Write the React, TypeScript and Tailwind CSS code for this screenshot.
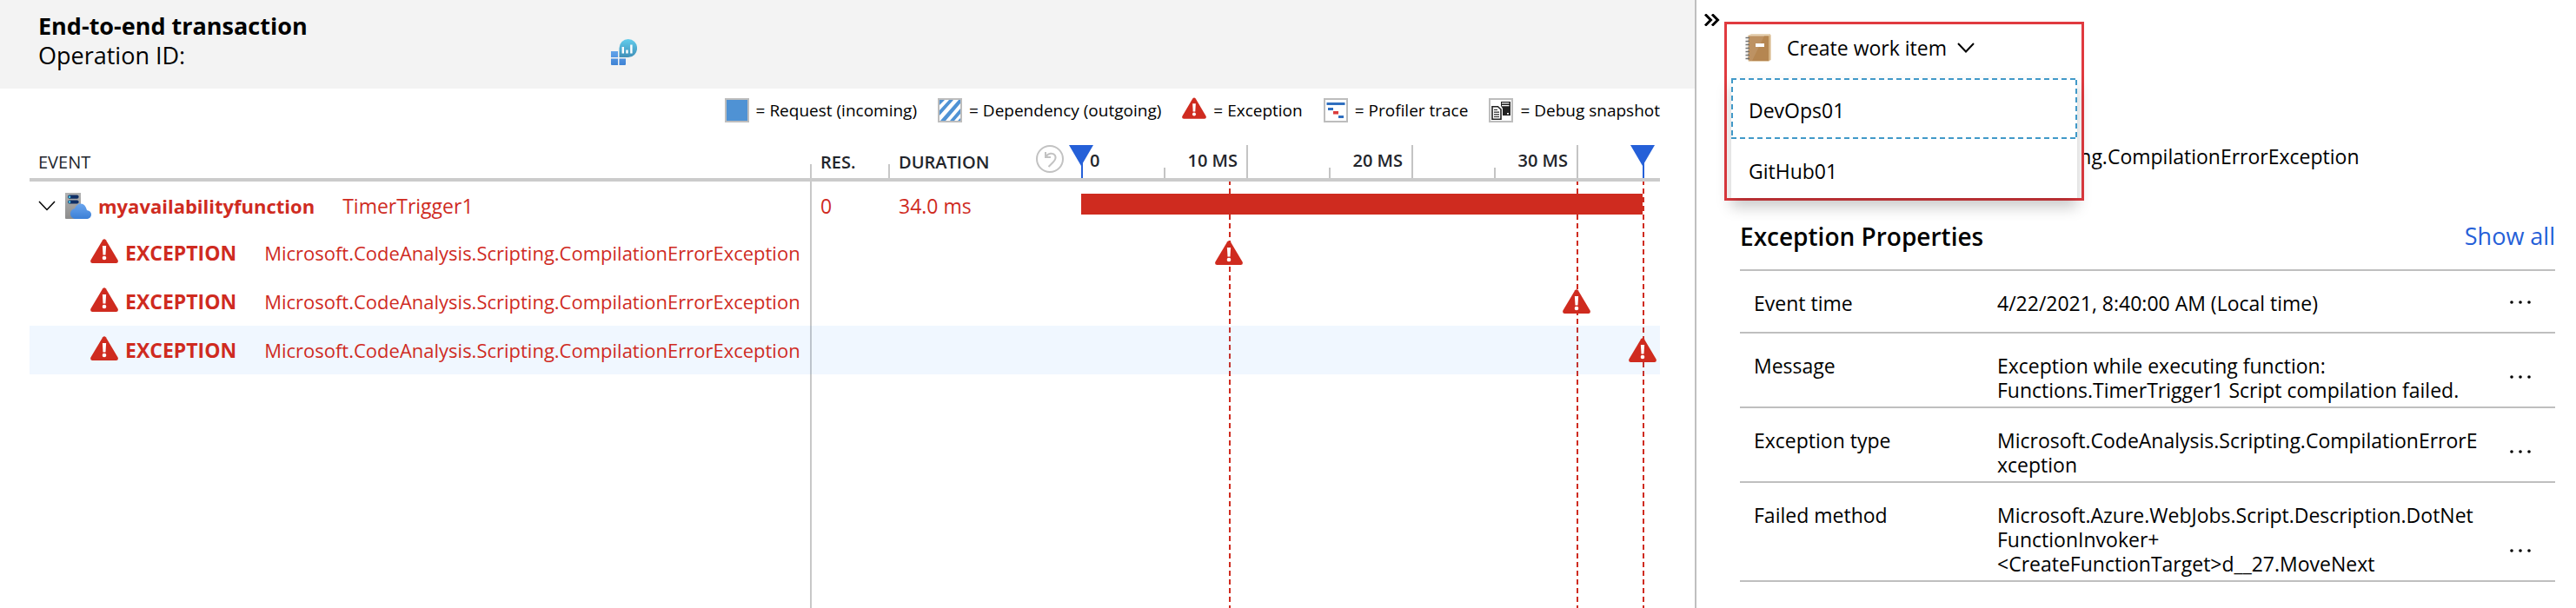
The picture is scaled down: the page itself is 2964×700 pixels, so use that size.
import type { ReactNode } from "react";

const RANGE_MS = 35.05;
const at = (ms: number) => ({ left: `${(ms / RANGE_MS) * 100}%` });

const COLUMNS = "grid grid-cols-[minmax(0,902fr)_86px_222px_minmax(0,666fr)]";

const exceptions = [
  { ms: 8.95, selected: false },
  { ms: 30, selected: false },
  { ms: 34, selected: true },
];

const properties = [
  { label: "Event time", value: "4/22/2021, 8:40:00 AM (Local time)" },
  {
    label: "Message",
    value: "Exception while executing function:\nFunctions.TimerTrigger1 Script compilation failed.",
  },
  {
    label: "Exception type",
    value: "Microsoft.CodeAnalysis.Scripting.CompilationErrorE\nxception",
  },
  {
    label: "Failed method",
    value:
      "Microsoft.Azure.WebJobs.Script.Description.DotNet\nFunctionInvoker+\n<CreateFunctionTarget>d__27.MoveNext",
  },
];

function ExceptionIcon({ className }: { className: string }) {
  return (
    <svg viewBox="0 0 32 28" className={className} aria-hidden="true">
      <path
        d="M14.2 1.2Q16-.9 17.8 1.2L31.6 24.6Q32.6 28 29.6 28H2.4Q-.6 28 .4 24.6Z"
        fill="#cf2b1f"
      />
      <path d="M13.9 8H18.1L17.5 18.6H14.5Z" fill="#fff" />
      <circle cx="16" cy="22" r="2.3" fill="#fff" />
    </svg>
  );
}

function InsightsIcon() {
  return (
    <svg viewBox="0 0 30 30" className="h-[30px] w-[30px]" aria-hidden="true">
      <defs>
        <linearGradient id="bubble" x1="0" y1="0" x2="0" y2="1">
          <stop offset="0" stopColor="#62cdec" />
          <stop offset="1" stopColor="#3f8fb8" />
        </linearGradient>
        <linearGradient id="tiles" x1="0" y1="0" x2="0" y2="1">
          <stop offset="0" stopColor="#62a3ea" />
          <stop offset="1" stopColor="#3f83d4" />
        </linearGradient>
      </defs>
      <path d="M0 14H8V21H0Z M0 22.5H8V30H1Q0 30 0 29Z M9.5 22.5H17V29Q17 30 16 30H9.5Z" fill="url(#tiles)" />
      <path d="M9.5 21V10.5A10.3 10.5 0 1 1 19.8 21Z" fill="url(#bubble)" />
      <path d="M12.6 9H15V16.5H12.6Z M17.3 12.5H19.7V16.5H17.3Z M22.2 6.5H24.6V16.5H22.2Z" fill="#fff" />
    </svg>
  );
}

function ServerIcon() {
  return (
    <svg viewBox="0 0 30 30" className="h-[30px] w-[30px] shrink-0" aria-hidden="true">
      <defs>
        <linearGradient id="drop" x1="0" y1="0" x2="0" y2="1">
          <stop offset="0" stopColor="#6aa5ee" />
          <stop offset="1" stopColor="#3b7fd6" />
        </linearGradient>
        <linearGradient id="case" x1="0" y1="0" x2="0" y2="1">
          <stop offset="0" stopColor="#b2b2b2" />
          <stop offset="1" stopColor="#8c8c8c" />
        </linearGradient>
      </defs>
      <path d="M0 0H18V30H1Q0 30 0 29Z" fill="url(#case)" />
      <rect x="3" y="2.6" width="12.6" height="4.2" rx="2" fill="#0f2f66" />
      <rect x="3" y="8.4" width="12.6" height="4.2" rx="2" fill="#0f2f66" />
      <circle cx="5" cy="4.7" r="1.3" fill="#50d0f0" />
      <circle cx="5" cy="10.5" r="1.3" fill="#50d0f0" />
      <path
        d="M18 12.5C21.5 12.5 24 15.5 25 20C28.5 20.5 30 22.5 30 25C30 28 27.5 30 24.500 30H12C8.500 30 6 27.500 6 24C6 21 8 18.500 11 18.200C12 15 14.500 12.500 18 12.500Z"
        fill="url(#drop)"
      />
    </svg>
  );
}

function NotebookIcon() {
  return (
    <svg viewBox="0 0 30 32" className="h-8 w-[30px]" aria-hidden="true">
      <path d="M3 2L7 0H29V30L27 32H4L3 30Z" fill="#e6d2b4" />
      <path d="M4 2.500H27V31H5L3 29Z" fill="#bd9263" />
      <path d="M22 2.500H27V31H8Z" fill="#b58651" />
      <path d="M27 2.500L29.500 1V30L27 31Z" fill="#d5b384" />
      <rect x="12" y="11" width="10" height="4" fill="#fff" />
      <path
        d="M.5 4.500H5M.5 8.500H5M.5 12.500H5M.5 16.500H5M.5 20.500H5M.5 24.500H5M.5 28.500H5"
        stroke="#6f6f6f"
        strokeWidth="1.600"
      />
      <path
        d="M.5 6H4M.5 10H4M.5 14H4M.5 18H4M.5 22H4M.5 26H4"
        stroke="#dedede"
        strokeWidth="1.200"
      />
    </svg>
  );
}

function Chevron({ className, strokeWidth }: { className: string; strokeWidth: number }) {
  return (
    <svg
      viewBox="0 0 20 12"
      className={className}
      fill="none"
      stroke="#000"
      strokeWidth={strokeWidth}
      aria-hidden="true"
    >
      <path d="M1 1L10 10.500L19 1" />
    </svg>
  );
}

function ProfilerIcon() {
  return (
    <svg viewBox="0 0 28 28" className="h-7 w-7" aria-hidden="true">
      <rect x="1" y="1" width="26" height="26" fill="#fff" stroke="#bdbdbd" strokeWidth="2" />
      <path d="M3.500 5H24.500V8H3.500Z M5 11H11V14H5Z M17 20H23V23H17Z" fill="#2f6fbf" />
      <path d="M11 15H17V18.500H11Z" fill="#dc3b3b" />
    </svg>
  );
}

function SnapshotIcon() {
  return (
    <svg viewBox="0 0 28 28" className="h-7 w-7" aria-hidden="true">
      <rect x="1" y="1" width="26" height="26" fill="#fff" stroke="#bdbdbd" strokeWidth="2" />
      <path d="M14 4H25V20H16V12L14 9Z" fill="#222" />
      <path d="M15 5.800H23.500M15 8.600H23.500" stroke="#fff" strokeWidth="1.200" />
      <rect x="21" y="17" width="2" height="1.500" fill="#fff" />
      <path d="M4 9.700H10.500L14 13V24.200H4Z" fill="#fff" stroke="#222" strokeWidth="1.600" />
      <path d="M6 13.500H10M6 16.200H12M6 18.900H12M6 21.500H12" stroke="#222" strokeWidth="1.200" />
    </svg>
  );
}

function LegendItem({ icon, children }: { icon: ReactNode; children: ReactNode }) {
  return (
    <li className="flex items-center gap-2">
      {icon}
      <span>= {children}</span>
    </li>
  );
}

function RangeHandle({ ms }: { ms: number }) {
  return (
    <svg viewBox="0 0 28 38" className="absolute top-0 h-[38px] w-7 -translate-x-1/2" style={at(ms)} aria-hidden="true">
      <path d="M0 0H28L14 24Z" fill="#2560d8" />
      <path d="M14 20H16V38H14Z" fill="#2560d8" />
    </svg>
  );
}

function TimeAxis() {
  return (
    <div className="relative h-full">
      {[5, 15, 25].map((ms) => (
        <span key={ms} className="absolute bottom-0 h-3 w-0.5 bg-[#c4c4c4]" style={at(ms)} />
      ))}
      {[10, 20, 30].map((ms) => (
        <span key={ms} className="absolute bottom-0 h-full w-0.5 bg-[#c4c4c4]" style={at(ms)}>
          <span className="absolute top-1 right-3 leading-7 whitespace-nowrap">{ms} MS</span>
        </span>
      ))}
      <span className="absolute top-1 left-2.5 leading-7">0</span>
      <RangeHandle ms={0} />
      <RangeHandle ms={34} />
    </div>
  );
}

function TransactionPanel() {
  return (
    <main className="flex min-w-0 flex-col">
      <header className="flex h-[102px] items-start bg-[#f3f3f3] pt-[13px] pl-11">
        <div className="w-[659px] text-[27px] leading-[34px]">
          <h1 className="font-bold">End-to-end transaction</h1>
          <p>Operation ID:</p>
        </div>
        <div className="pt-8">
          <InsightsIcon />
        </div>
      </header>

      <ul className="flex justify-end gap-6 pt-2.5 pr-10 text-[19px] leading-7">
        <LegendItem icon={<span className="h-7 w-7 border-2 border-[#bdbdbd] bg-[#4f92d4]" />}>
          Request (incoming)
        </LegendItem>
        <LegendItem
          icon={
            <svg viewBox="0 0 28 28" className="h-7 w-7" aria-hidden="true">
              <rect x="1" y="1" width="26" height="26" fill="#4f92d4" stroke="#bdbdbd" strokeWidth="2" />
              <path
                d="M2 8L8 2H13L2 14Z M2 20L18 2H24L3 26H2Z M9 26L26 6V12L14 26Z M19 26L26 18V23L23 26Z"
                fill="#fff"
              />
            </svg>
          }
        >
          Dependency (outgoing)
        </LegendItem>
        <LegendItem icon={<ExceptionIcon className="mb-1 h-[25px] w-7" />}>Exception</LegendItem>
        <LegendItem icon={<ProfilerIcon />}>Profiler trace</LegendItem>
        <LegendItem icon={<SnapshotIcon />}>Debug snapshot</LegendItem>
      </ul>

      <div className="relative mt-[26px] mr-10 ml-[34px] flex flex-1 flex-col">
        <div className={`absolute inset-x-0 top-[42px] bottom-0 ${COLUMNS}`} aria-hidden="true">
          <div className="mr-0.5 border-r-2 border-[#c8c8c8]" />
          <div />
          <div />
          <div className="relative overflow-hidden">
            {exceptions.map(({ ms }) => (
              <span
                key={ms}
                className="absolute inset-y-0 w-0.5 bg-[repeating-linear-gradient(to_bottom,#cf2b1f_0_4px,transparent_4px_8px,#cf2b1f_8px_10px)]"
                style={at(ms)}
              />
            ))}
          </div>
        </div>

        <table className="relative block">
          <thead className="block">
            <tr className={`${COLUMNS} h-[42px] border-b-4 border-[#cbcbcb] text-left text-[20px] leading-7 text-[#22252b]`}>
              <th className="flex items-end pr-0.5 pl-2.5 font-medium">
                <span className="flex-1 pb-1">EVENT</span>
                <span className="h-4 w-0.5 bg-[#c8c8c8]" />
              </th>
              <th className="flex items-end pb-1 pl-2 font-semibold">RES.</th>
              <th className="flex items-end font-semibold">
                <span className="h-4 w-0.5 bg-[#c8c8c8]" />
                <span className="flex-1 pb-1 pl-2.5">DURATION</span>
                <button type="button" aria-label="Reset range" className="mr-5 mb-1.5">
                  <svg viewBox="0 0 32 32" className="h-8 w-8" fill="none" stroke="#c2c2c2" strokeWidth="2">
                    <circle cx="16" cy="16" r="15" />
                    <path d="M11 8V14H17" />
                    <path d="M11.500 13.500C14 9 20 8.500 22 12C23.500 15 21.500 18 19.500 20L14.500 25" />
                  </svg>
                </button>
              </th>
              <th className="font-semibold">
                <TimeAxis />
              </th>
            </tr>
          </thead>
          <tbody className="block text-[23px] leading-8 text-[#cf2b1f]">
            <tr className={`${COLUMNS} h-[54px]`}>
              <td className="flex items-center pt-0.5 pl-2.5 whitespace-nowrap">
                <button type="button" aria-label="Collapse" className="mr-[11px]">
                  <Chevron className="h-3 w-5" strokeWidth={1.5} />
                </button>
                <ServerIcon />
                <span className="pl-2 text-[22px] font-bold">myavailabilityfunction</span>
                <span className="pl-8">TimerTrigger1</span>
              </td>
              <td className="flex items-center pt-0.5 pl-2">0</td>
              <td className="flex items-center pt-0.5 pl-3">34.0 ms</td>
              <td className="relative">
                <span
                  className="absolute top-3.5 left-0 h-6 bg-[#cf2b1f]"
                  style={{ width: `${(34 / RANGE_MS) * 100}%` }}
                />
              </td>
            </tr>
            {exceptions.map(({ ms, selected }) => (
              <tr key={ms} className={selected ? `${COLUMNS} h-14 bg-[#439bff]/8` : `${COLUMNS} h-14`}>
                <td className="flex items-center pl-[70px] whitespace-nowrap">
                  <ExceptionIcon className="mb-1 h-7 w-8 shrink-0" />
                  <span className="pl-2 font-bold">EXCEPTION</span>
                  <span className="pl-8 text-[22px]">Microsoft.CodeAnalysis.Scripting.CompilationErrorException</span>
                </td>
                <td />
                <td />
                <td className="relative">
                  <span className="absolute top-3.5 -translate-x-1/2" style={at(ms)}>
                    <ExceptionIcon className="h-7 w-8" />
                  </span>
                </td>
              </tr>
            ))}
          </tbody>
        </table>
      </div>
    </main>
  );
}

function DetailsPanel() {
  return (
    <aside className="relative border-l-2 border-[#bfbfbf] pr-6 pl-[50px]">
      <button type="button" aria-label="Collapse panel" className="absolute top-4 left-[9px]">
        <svg viewBox="0 0 18 14" className="h-3.5 w-[18px]" fill="none" stroke="#000" strokeWidth="3">
          <path d="M1 .5L7.500 7L1 13.500M9 .5L15.500 7L9 13.500" />
        </svg>
      </button>

      <p className="pt-[164px] pl-[68px] text-[23px] leading-8 whitespace-nowrap">
        Microsoft.CodeAnalysis.Scripting.CompilationErrorException
      </p>

      <div className="absolute top-[25px] left-8 w-[414px] border-3 border-[#e03a3f] bg-white text-[23px] leading-8">
        <button type="button" className="flex h-[62px] items-center pb-2 pl-[21px]">
          <NotebookIcon />
          <span className="pr-3 pl-[18px]">Create work item</span>
          <Chevron className="h-3 w-5" strokeWidth={2} />
        </button>
        <ul className="mx-[5px] shadow-[0_10px_16px_rgba(0,0,0,0.22)]">
          <li>
            <button type="button" className="relative block h-[70px] w-full pt-1 pl-5 text-left">
              <svg className="absolute inset-0 h-full w-full" aria-hidden="true">
                <rect width="100%" height="100%" fill="none" stroke="#4199c8" strokeWidth="4" strokeDasharray="6 4" />
              </svg>
              DevOps01
            </button>
          </li>
          <li>
            <button type="button" className="block h-[68px] w-full pt-1.5 pl-5 text-left">
              GitHub01
            </button>
          </li>
        </ul>
      </div>

      <div className="flex items-center justify-between pt-[56px] pb-[18px] text-[27px] leading-10">
        <h2 className="text-[28px] font-semibold">Exception Properties</h2>
        <a href="#all" className="text-[#2560d8]">
          Show all
        </a>
      </div>

      <table className="w-full table-fixed border-separate border-spacing-0 border-t-2 border-[#bfbfbf] text-[23px] leading-7">
        <colgroup>
          <col className="w-[280px]" />
          <col />
          <col className="w-[84px]" />
        </colgroup>
        <tbody className="[&>tr>*]:border-b-2 [&>tr>*]:border-[#bfbfbf]">
          {properties.map(({ label, value }) => (
            <tr key={label} className="h-[72px]">
              <th className="pt-[23px] pb-[5px] pl-4 text-left align-top font-normal">{label}</th>
              <td className="pt-[23px] pb-[5px] pl-4 align-top whitespace-pre">{value}</td>
              <td className="pr-7 pb-[26px] text-right align-bottom">
                <button type="button" aria-label={`More options for ${label}`} className="block w-full">
                  <svg viewBox="0 0 24 16" className="ml-auto h-4 w-6" aria-hidden="true">
                    <circle cx="2" cy="8" r="1.800" />
                    <circle cx="12" cy="8" r="1.800" />
                    <circle cx="22" cy="8" r="1.800" />
                  </svg>
                </button>
              </td>
            </tr>
          ))}
        </tbody>
      </table>
    </aside>
  );
}

export default function App() {
  return (
    <div className="grid min-h-screen grid-cols-[1950fr_1014fr] bg-white font-['Open_Sans','Noto_Sans',sans-serif] text-black">
      <TransactionPanel />
      <DetailsPanel />
    </div>
  );
}
